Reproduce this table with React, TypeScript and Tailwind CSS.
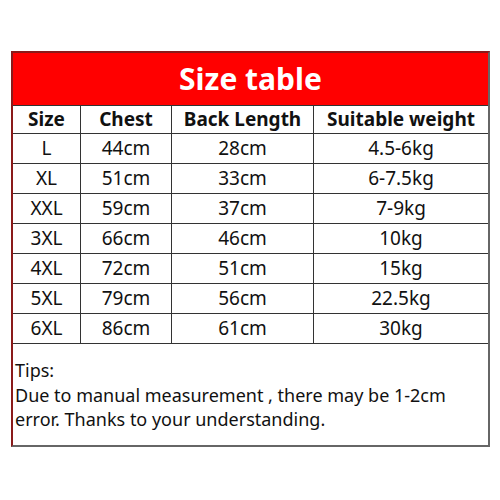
import React from "react";

const rows = [
  ["L", "44cm", "28cm", "4.5-6kg"],
  ["XL", "51cm", "33cm", "6-7.5kg"],
  ["XXL", "59cm", "37cm", "7-9kg"],
  ["3XL", "66cm", "46cm", "10kg"],
  ["4XL", "72cm", "51cm", "15kg"],
  ["5XL", "79cm", "56cm", "22.5kg"],
  ["6XL", "86cm", "61cm", "30kg"],
];

export default function App() {
  return (
    <div className="w-[500px] h-[500px] bg-white pt-[51px] pl-[11px]" style={{ fontFamily: '"Noto Sans", sans-serif' }}>
      <div className="w-[479px] border-2 border-[#666] border-t-[#8a1a1a] border-l-[#8a1a1a]">
        <div className="h-[53px] bg-[#ff0000] border-b border-[#333] flex items-center justify-center text-white font-bold text-[30px] leading-none">
          Size table
        </div>
        <div className="grid grid-cols-[68px_91px_142px_174px] text-[#111]">
          {["Size", "Chest", "Back Length", "Suitable weight"].map((h, i) => (
            <div key={h} className={`h-[28px] flex items-center justify-center font-bold text-[19px] border-b border-[#333] ${i < 3 ? "border-r" : ""}`}>
              {h}
            </div>
          ))}
          {rows.map((r) =>
            r.map((c, i) => (
              <div key={r[0] + i} className={`h-[30px] flex items-center justify-center text-[19px] border-b border-[#333] ${i < 3 ? "border-r" : ""}`}>
                {c}
              </div>
            ))
          )}
        </div>
        <div className="h-[101px] px-[2px] pt-[14px] text-[18px] leading-[24.5px] text-[#111]">
          <div>Tips:</div>
          <div>Due to manual measurement , there may be 1-2cm</div>
          <div>error. Thanks to your understanding.</div>
        </div>
      </div>
    </div>
  );
}
